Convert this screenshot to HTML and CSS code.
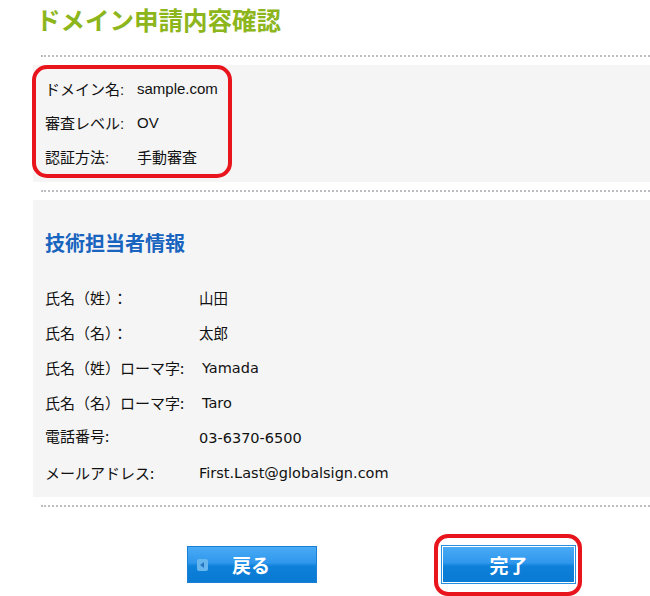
FILE: index.html
```html
<!DOCTYPE html>
<html lang="ja">
<head>
<meta charset="utf-8">
<title>ドメイン申請内容確認</title>
<link rel="stylesheet" href="styles.css">
</head>
<body>
<div class="page">
  <h1 class="title">ドメイン申請内容確認</h1>
  <div class="dots"></div>
  <section class="panel panel-summary">
    <div class="note note-summary"></div>
    <div class="rows rows-summary">
      <div class="label">ドメイン名:</div><div class="value">sample.com</div>
      <div class="label">審査レベル:</div><div class="value">OV</div>
      <div class="label">認証方法:</div><div class="value">手動審査</div>
    </div>
  </section>
  <div class="dots"></div>
  <section class="panel panel-contact">
    <h2 class="heading">技術担当者情報</h2>
    <div class="rows rows-contact">
      <div class="label">氏名（姓）：</div><div class="value">山田</div>
      <div class="label">氏名（名）：</div><div class="value">太郎</div>
      <div class="label">氏名（姓）ローマ字:</div><div class="value shift">Yamada</div>
      <div class="label">氏名（名）ローマ字:</div><div class="value shift">Taro</div>
      <div class="label up">電話番号:</div><div class="value">03-6370-6500</div>
      <div class="label">メールアドレス:</div><div class="value">First.Last@globalsign.com</div>
    </div>
  </section>
  <div class="dots"></div>
  <div class="actions">
    <button class="btn btn-back"><span class="btn-icon"></span><span class="btn-text">戻る</span></button>
    <button class="btn btn-done"><span class="note note-done"></span><span class="btn-text">完了</span></button>
  </div>
</div>
</body>
</html>
```
FILE: styles.css
```css
* { box-sizing: border-box; }
html, body { margin: 0; padding: 0; background: #fff; }
body {
  font-family: "Liberation Sans", "Noto Sans CJK JP", sans-serif;
  font-size: 15px;
  color: #111;
  width: 650px;
  height: 596px;
  overflow: hidden;
}
.page { padding-left: 33px; }
.title {
  margin: 0;
  padding: 5px 0 0 3px;
  height: 55px;
  font-family: "Noto Sans CJK JP", sans-serif;
  font-size: 24.5px;
  line-height: 30px;
  font-weight: 700;
  color: #8db51c;
}
.dots {
  margin-left: 8px;
  height: 2px;
  border-top: 2px dotted #bdbdc2;
}
.panel { background: #f5f5f5; position: relative; }
.panel-summary { margin-top: 8px; padding: 6px 0 9px 12px; }
.panel-contact { margin-top: 8px; padding: 28px 0 7px 12px; }
.rows { display: grid; align-items: center; }
.rows-summary { grid-template-columns: 92px 1fr; grid-auto-rows: 34px; }
.rows-contact {
  grid-template-columns: 154px 1fr;
  grid-auto-rows: 35px;
  font-family: "DejaVu Sans", "Noto Sans CJK JP", sans-serif;
}
.rows-contact .label { font-family: "Noto Sans CJK JP", sans-serif; }
.rows-contact .value { font-size: 14.5px; }
.label, .value { white-space: nowrap; }
.value.shift { padding-left: 3px; }
.label.up { position: relative; top: -2px; }
.heading {
  margin: 0 0 22px;
  font-family: "Noto Sans CJK JP", sans-serif;
  font-size: 20px;
  line-height: 30px;
  font-weight: 700;
  color: #1864bf;
}
.panel-contact + .dots { margin-top: 8px; }
.panel-summary + .dots { margin-top: 8px; }
.actions {
  display: flex;
  align-items: flex-start;
  margin-top: 39px;
  padding-left: 154px;
  gap: 125px;
}
.btn {
  position: relative;
  height: 37px;
  border: 1px solid #1a80d6;
  background: linear-gradient(#4aabf6 0%, #2f97ec 45%, #0d80d9 55%, #0a7ad3 100%);
  color: #fff;
  font-family: "Noto Sans CJK JP", sans-serif;
  font-size: 19px;
  font-weight: 700;
  padding: 0;
  display: flex;
  align-items: center;
}
.btn-back { width: 130px; justify-content: flex-start; }
.btn-done { width: 133px; justify-content: center; border-color: #fff; box-shadow: 0 0 0 1px #2a8ee0; }
.btn-icon {
  width: 11px;
  height: 12px;
  margin-left: 9px;
  margin-right: 24px;
  border-radius: 2px;
  background: #68b6ee;
  position: relative;
}
.btn-icon::after {
  content: "";
  position: absolute;
  left: 3px;
  top: 3px;
  border-top: 3px solid transparent;
  border-bottom: 3px solid transparent;
  border-right: 4px solid #2577c4;
}
.btn-text { line-height: 1; }
.note {
  position: absolute;
  border: 4px solid #e8151d;
  border-radius: 15px;
  pointer-events: none;
}
.note-summary { left: -1px; top: 0; width: 200px; height: 113px; }
.note-done { left: -9px; top: -13px; width: 148px; height: 62px; border-radius: 14px; }
```
